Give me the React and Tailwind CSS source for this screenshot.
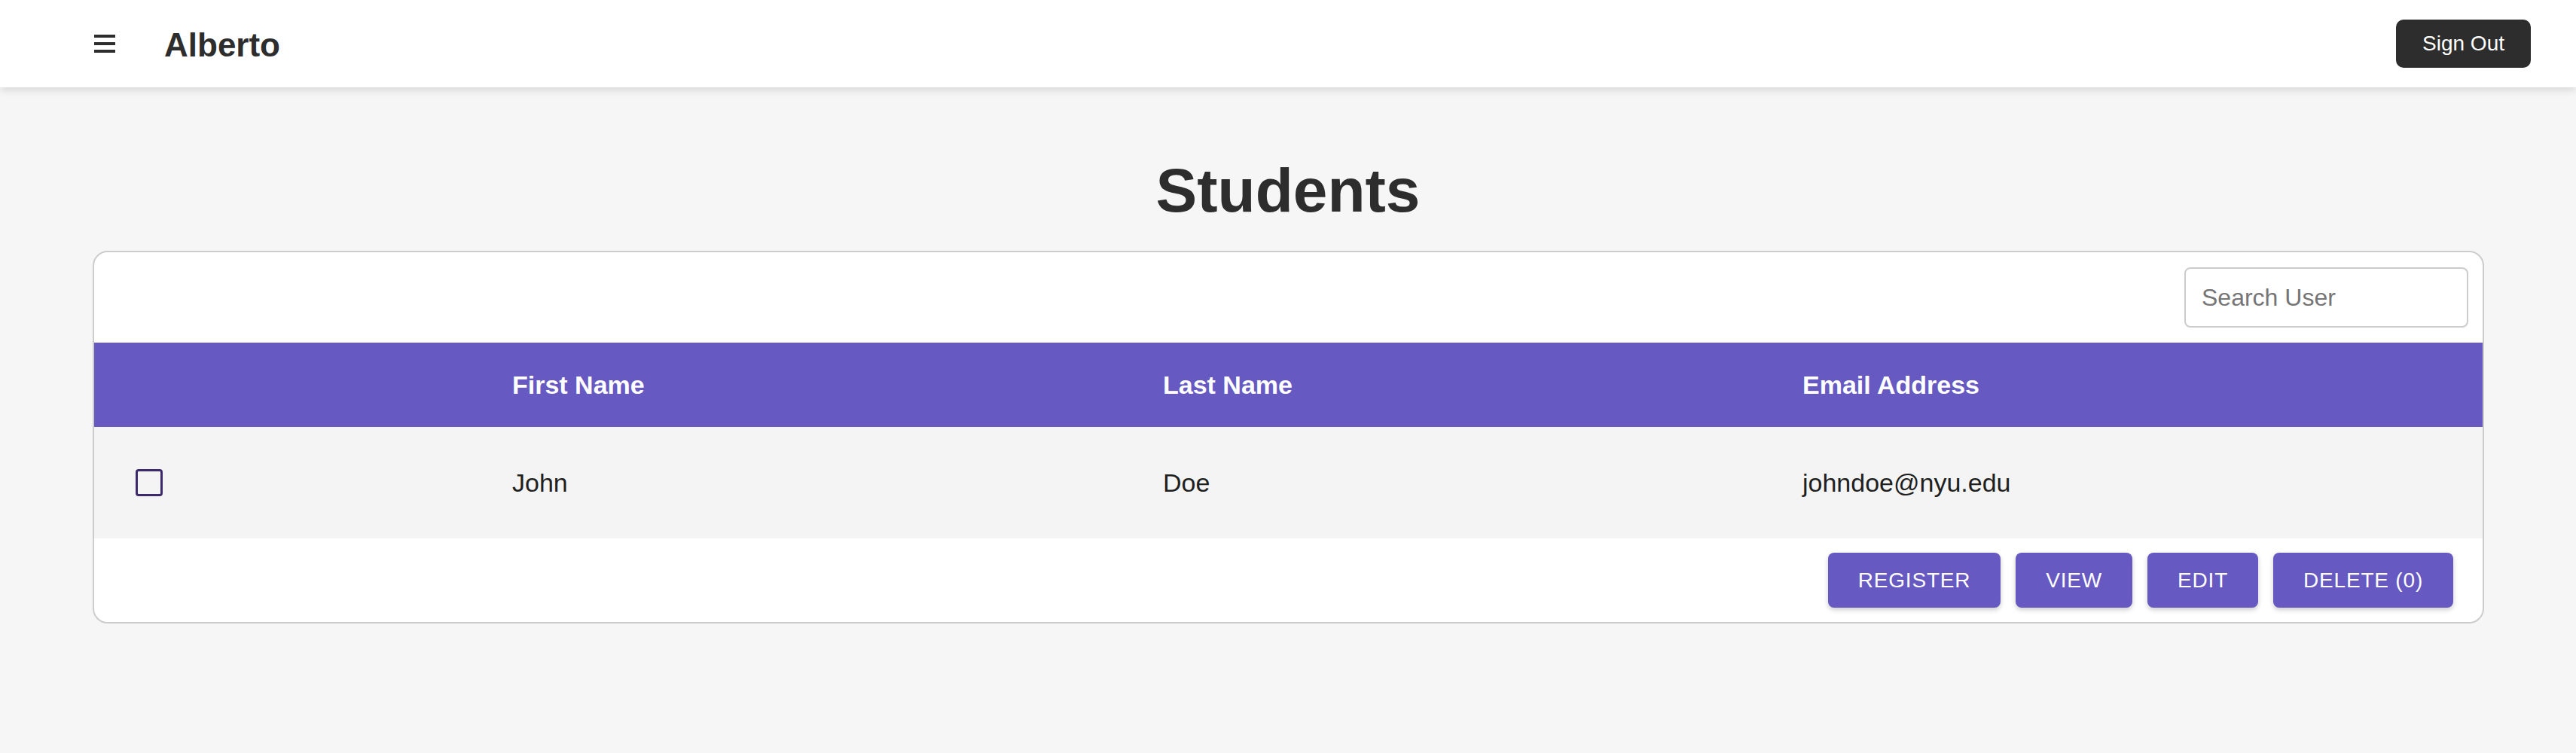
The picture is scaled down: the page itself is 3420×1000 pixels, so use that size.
import { useState } from "react"

const rows = [
    { id: 1, first: "John", last: "Doe", email: "johndoe@nyu.edu" },
]

function Navbar(){
    return(
        <div className="h-[116px] bg-white flex items-center justify-between pl-[125px] pr-[60px] shadow-[0_4px_10px_rgba(0,0,0,0.12)] relative">
            <div className="flex items-center">
                <button type="button" className="flex flex-col gap-[6px]">
                    <span className="block w-[28px] h-[4px] bg-[#2d2d2d]"></span>
                    <span className="block w-[28px] h-[4px] bg-[#2d2d2d]"></span>
                    <span className="block w-[28px] h-[4px] bg-[#2d2d2d]"></span>
                </button>
                <h2 className="ml-[65px] mt-[3px] text-[44px] leading-none font-bold text-[#2d2d2d]">Alberto</h2>
            </div>
            <button type="button" className="h-[64px] px-[35px] bg-[#2d2d2d] text-white text-[28px] rounded-[10px]">Sign Out</button>
        </div>
    )
}

export default function App(){
    const [search, setSearch] = useState("")
    const [selected, setSelected] = useState([])

    function toggle(id){
        setSelected(selected.includes(id) ? selected.filter((s)=>s!==id) : [...selected, id])
    }

    const shown = rows.filter((r)=>(r.first + r.last + r.email).toLowerCase().includes(search.toLowerCase()))

    return(
        <div className="min-h-screen bg-[#f6f6f6] font-['Liberation_Sans',Arial,sans-serif]">
            <Navbar></Navbar>
            <h1 className="pt-[96px] text-center text-[82px] leading-none font-bold text-[#2d2d2d]">Students</h1>
            <div className="mt-[39px] ml-[123px] mr-[122px] bg-white border-2 border-[#cccccc] rounded-[20px] overflow-hidden">
                {/* toolbar */}
                <div className="h-[120px] flex items-center justify-end pr-[19px]">
                    <input
                        value={search}
                        onChange={(e)=>setSearch(e.target.value)}
                        placeholder="Search User"
                        className="w-[377px] h-[80px] border-2 border-[#cccccc] rounded-[8px] pl-[21px] text-[32px] text-[#222] placeholder:text-[#757575] outline-none"
                    />
                </div>
                {/* table head */}
                <div className="grid grid-cols-[555px_864px_849px_1fr] h-[112px] items-center bg-[#6659c1] text-white text-[34px] font-bold">
                    <div></div>
                    <div>First Name</div>
                    <div>Last Name</div>
                    <div>Email Address</div>
                </div>
                {
                    shown.map((r)=>(
                        <div key={r.id} className="grid grid-cols-[555px_864px_849px_1fr] h-[148px] items-center bg-[#f4f4f4] text-[34px] text-[#1f1f1f]">
                            <div className="pl-[55px] flex items-center">
                                <button
                                    type="button"
                                    onClick={()=>toggle(r.id)}
                                    className={"w-[36px] h-[36px] border-[3px] border-[#3d2a6b] rounded-[4px] " + (selected.includes(r.id) ? "bg-[#3d2a6b]" : "bg-transparent")}
                                ></button>
                            </div>
                            <div>{r.first}</div>
                            <div>{r.last}</div>
                            <div>{r.email}</div>
                        </div>
                    ))
                }
                {/* actions */}
                <div className="h-[111px] flex items-center justify-end gap-[20px] pr-[39px]">
                    <button type="button" className="h-[73px] px-[40px] bg-[#6659c1] text-white text-[28px] tracking-[0.8px] rounded-[8px] shadow-[0_3px_6px_rgba(0,0,0,0.2)]">REGISTER</button>
                    <button type="button" className="h-[73px] px-[40px] bg-[#6659c1] text-white text-[28px] tracking-[0.8px] rounded-[8px] shadow-[0_3px_6px_rgba(0,0,0,0.2)]">VIEW</button>
                    <button type="button" className="h-[73px] px-[40px] bg-[#6659c1] text-white text-[28px] tracking-[0.8px] rounded-[8px] shadow-[0_3px_6px_rgba(0,0,0,0.2)]">EDIT</button>
                    <button type="button" className="h-[73px] px-[40px] bg-[#6659c1] text-white text-[28px] tracking-[0.8px] rounded-[8px] shadow-[0_3px_6px_rgba(0,0,0,0.2)]">DELETE ({selected.length})</button>
                </div>
            </div>
        </div>
    )
}
